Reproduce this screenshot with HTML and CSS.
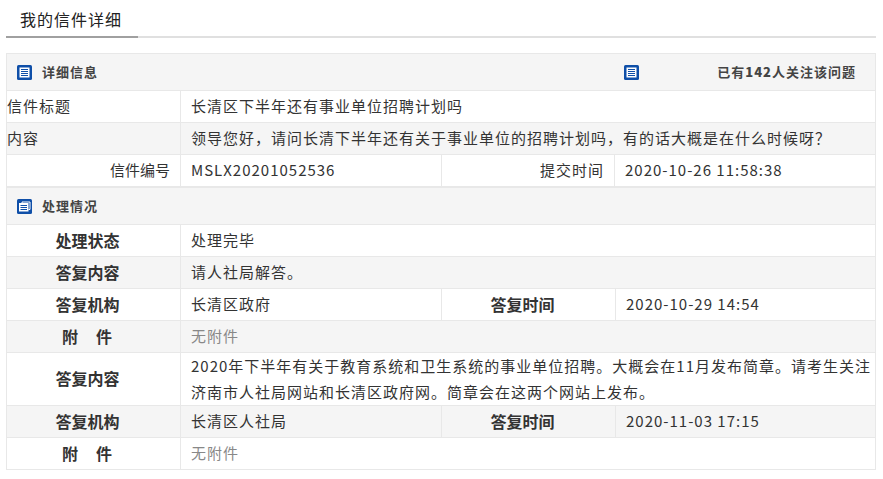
FILE: index.html
```html
<!DOCTYPE html>
<html lang="zh-CN">
<head>
<meta charset="utf-8">
<title>我的信件详细</title>
<link rel="stylesheet" href="styles.css">
</head>
<body>
<div class="page">
  <div class="tabbar"><h2 class="tab">我的信件详细</h2></div>
  <div class="panel">
    <div class="head">
      <div class="head-left">
        <svg class="icon" viewBox="0 0 15 15"><rect width="15" height="15" rx="1.5" fill="#0f4fa8"/><rect x="2.5" y="2.5" width="10" height="10" fill="#fff"/><path d="M4 4.5h7M4 6.5h7M4 8.5h7M4 10.5h7" stroke="#0f4fa8" stroke-width="1"/></svg>
        <span class="head-text">详细信息</span>
      </div>
      <div class="head-mid">
        <svg class="icon" viewBox="0 0 15 15"><rect width="15" height="15" rx="1.5" fill="#0f4fa8"/><rect x="2.5" y="2.5" width="10" height="10" fill="#fff"/><path d="M4 4.5h7M4 6.5h7M4 8.5h7M4 10.5h7" stroke="#0f4fa8" stroke-width="1"/></svg>
      </div>
      <div class="head-right head-text">已有<b class="num">142</b>人关注该问题</div>
    </div>
    <table class="grid">
      <colgroup><col class="c1"><col class="c2"><col class="c3a"><col></colgroup>
      <tr><td class="plain">信件标题</td><td colspan="3">长清区下半年还有事业单位招聘计划吗</td></tr>
      <tr class="alt"><td class="plain">内容</td><td colspan="3">领导您好，请问长清下半年还有关于事业单位的招聘计划吗，有的话大概是在什么时候呀？</td></tr>
      <tr class="last"><td class="right tight">信件编号</td><td>MSLX20201052536</td><td class="right">提交时间</td><td>2020-10-26 11:58:38</td></tr>
    </table>
    <div class="head">
      <div class="head-left">
        <svg class="icon" viewBox="0 0 15 15"><rect width="15" height="15" rx="1.5" fill="#0f4fa8"/><path d="M5 4.500V3h8v7.500h-1.500" fill="none" stroke="#fff" stroke-width="1"/><rect x="2" y="4" width="9.500" height="8.500" fill="#fff"/><path d="M3.500 6.500h6.500M3.500 8.500h6.500M3.500 10.500h6.500" stroke="#0f4fa8" stroke-width="1"/></svg>
        <span class="head-text">处理情况</span>
      </div>
    </div>
    <table class="grid">
      <colgroup><col class="c1"><col class="c2"><col class="c3b"><col></colgroup>
      <tr><th>处理状态</th><td colspan="3">处理完毕</td></tr>
      <tr class="alt"><th>答复内容</th><td colspan="3">请人社局解答。</td></tr>
      <tr><th>答复机构</th><td>长清区政府</td><th>答复时间</th><td>2020-10-29 14:54</td></tr>
      <tr class="alt"><th class="wide">附&emsp;件</th><td colspan="3" class="muted">无附件</td></tr>
      <tr><th>答复内容</th><td colspan="3" class="multi">2020年下半年有关于教育系统和卫生系统的事业单位招聘。大概会在11月发布简章。请考生关注济南市人社局网站和长清区政府网。简章会在这两个网站上发布。</td></tr>
      <tr class="alt"><th>答复机构</th><td>长清区人社局</td><th>答复时间</th><td>2020-11-03 17:15</td></tr>
      <tr class="end"><th class="wide">附&emsp;件</th><td colspan="3" class="muted">无附件</td></tr>
    </table>
  </div>
</div>
</body>
</html>
```

FILE: styles.css
```css
* { box-sizing: border-box; }
html, body { margin: 0; padding: 0; background: #fff; }
body {
  font-family: "Noto Sans CJK SC", "Open Sans", sans-serif;
  font-size: 15px;
  letter-spacing: 1px;
  color: #333;
}
.page { width: 870px; margin-left: 6px; padding-top: 4px; }
.tabbar { height: 34px; border-bottom: 2px solid #e0e0e0; }
.tab {
  display: inline-block;
  width: 132px;
  height: 34px;
  margin: 0;
  padding-left: 14px;
  font-size: 16px;
  font-weight: 400;
  line-height: 31px;
  color: #222;
  border-bottom: 2px solid #a0a0a0;
}
.panel {
  margin-top: 15px;
  border: 1px solid #e8e8e8;
}
.head {
  display: flex;
  align-items: center;
  height: 37px;
  background: #f5f5f5;
  border-bottom: 1px solid #e8e8e8;
  font-size: 13px;
  font-weight: 700;
  color: #444;
}
.head-left { display: flex; align-items: center; gap: 10px; padding-left: 10px; width: 617px; }
.head-mid { display: flex; align-items: center; flex: 1; }
.head-right { padding-right: 19px; }
.head-text { padding-bottom: 2px; }
.icon { display: block; width: 15px; height: 15px; flex: none; }
.grid {
  width: 868px;
  table-layout: fixed;
  border-collapse: separate;
  border-spacing: 0;
}
.c1 { width: 174px; }
.c2 { width: 261px; }
.c3a { width: 173px; }
.c3b { width: 174px; }
.grid td, .grid th {
  height: 32px;
  padding: 0 10px 2px;
  border-bottom: 1px solid #e8e8e8;
  border-right: 1px solid #e8e8e8;
  line-height: 26px;
  font-weight: 400;
  text-align: left;
}
.grid tr > :last-child { border-right: 0; }
.grid td:nth-child(2) { padding-left: 10px; }
.grid th {
  padding-left: 0;
  padding-right: 12px;
  text-align: center;
  font-size: 16px;
  font-weight: 700;
  letter-spacing: 0;
  color: #333;
}
.grid .wide { letter-spacing: 1px; }
.grid .plain { padding-left: 0; padding-right: 0; }
.grid .right { text-align: right; }
.grid .tight { letter-spacing: 0; }
.alt td, .alt th { background: #f5f5f5; }
.grid .muted { color: #888; }
.grid .multi { padding-right: 3px; padding-bottom: 0; }
.last td { border-bottom-width: 2px; height: 33px; }
.end td, .end th { border-bottom: 0; height: 31px; }
```
